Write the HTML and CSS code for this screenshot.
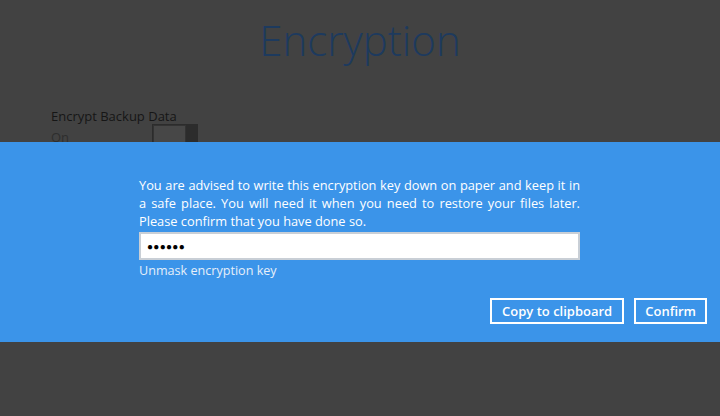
FILE: index.html
```html
<!DOCTYPE html>
<html>
<head>
<meta charset="utf-8">
<link rel="stylesheet" href="styles.css">
</head>
<body>
<div class="page">
  <h1 class="title">Encryption</h1>
  <div class="setting">
    <div class="setting-label">Encrypt Backup Data</div>
    <div class="setting-row">
      <span class="setting-value">On</span>
      <span class="toggle"><span class="knob"></span></span>
    </div>
  </div>
</div>
<div class="band">
  <div class="dialog">
    <p class="message">You are advised to write this encryption key down on paper and keep it in a safe place. You will need it when you need to restore your files later. Please confirm that you have done so.</p>
    <div class="keybox">&#9679;&#9679;&#9679;&#9679;&#9679;&#9679;</div>
    <div class="unmask">Unmask encryption key</div>
  </div>
  <div class="actions">
    <button class="btn btn-copy">Copy to clipboard</button>
    <button class="btn">Confirm</button>
  </div>
</div>
</body>
</html>
```
FILE: styles.css
```css
html, body {
  margin: 0;
  padding: 0;
}
body {
  width: 720px;
  height: 416px;
  overflow: hidden;
  background: #424242;
  font-family: "Open Sans", "Noto Sans", sans-serif;
  position: relative;
}
.page {
  padding-top: 12px;
}
.title {
  margin: 0;
  text-align: center;
  font-weight: 300;
  font-size: 42px;
  line-height: 56px;
  color: #1d3a5e;
}
.setting {
  margin-top: 39px;
  margin-left: 51px;
}
.setting-label {
  font-size: 13px;
  line-height: 18px;
  color: #161616;
}
.setting-row {
  display: flex;
  align-items: flex-start;
  margin-top: 3px;
}
.setting-value {
  font-size: 13px;
  line-height: 18px;
  color: #2e2e2e;
  width: 101px;
}
.toggle {
  display: block;
  width: 46px;
  height: 24px;
  background: #2c2c2c;
  margin-top: -4px;
  position: relative;
}
.knob {
  display: block;
  position: absolute;
  left: 1px;
  top: 1px;
  width: 33px;
  height: 22px;
  background: #474747;
  border: 1px solid #333;
  box-sizing: border-box;
}
.band {
  position: absolute;
  left: 0;
  right: 0;
  top: 142px;
  height: 200px;
  background: #3b94e9;
  color: #ffffff;
}
.dialog {
  width: 441px;
  margin-left: 139px;
  padding-top: 34px;
}
.message {
  margin: 0;
  font-size: 12.8px;
  line-height: 18px;
  text-align: justify;
}
.keybox {
  margin-top: 2px;
  height: 28px;
  box-sizing: border-box;
  background: #ffffff;
  border: 2px solid #c9cfd6;
  color: #000000;
  font-size: 10px;
  line-height: 24px;
  padding-left: 6px;
  letter-spacing: 0.3px;
}
.unmask {
  margin-top: 2px;
  font-size: 12.6px;
  line-height: 18px;
  color: #e6eff9;
}
.actions {
  display: flex;
  justify-content: flex-end;
  gap: 10px;
  padding-right: 13px;
  margin-top: 18px;
}
.btn {
  font-family: "Open Sans", "Noto Sans", sans-serif;
  font-weight: 600;
  font-size: 13px;
  color: #ffffff;
  background: transparent;
  border: 2px solid #ffffff;
  height: 26px;
  padding: 0 9px;
  line-height: 20px;
  cursor: pointer;
}
.btn-copy {
  padding: 0 10px;
}
```
